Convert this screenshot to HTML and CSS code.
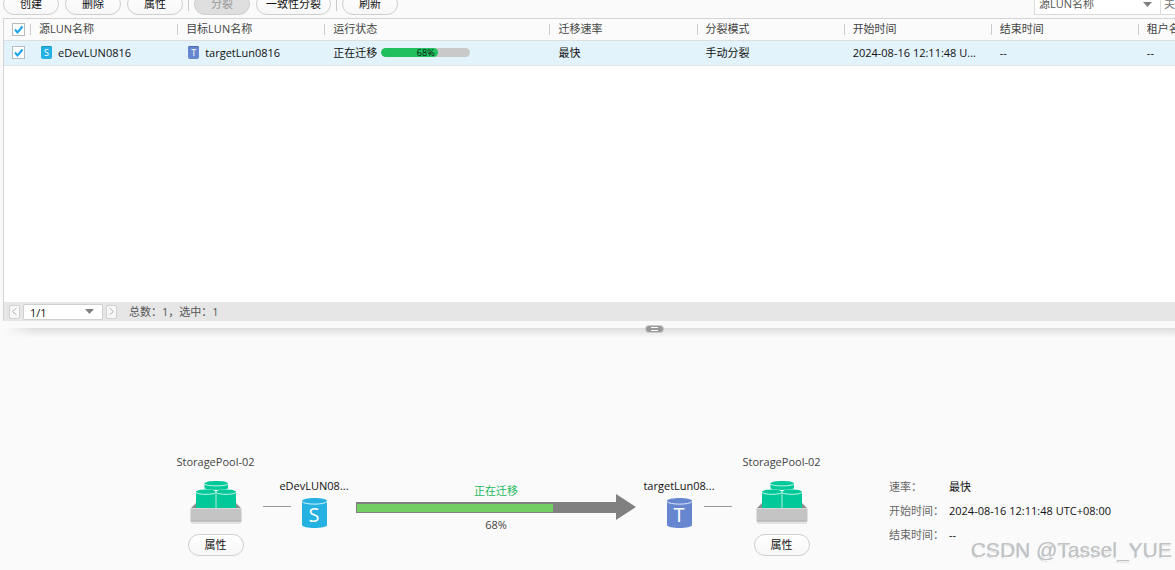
FILE: index.html
```html
<!DOCTYPE html>
<html lang="zh-CN">
<head>
<meta charset="utf-8">
<title>LUN 迁移</title>
<link rel="stylesheet" href="styles.css">
</head>
<body>
<svg class="defs" width="0" height="0" aria-hidden="true">
  <symbol id="pool" viewBox="0 0 56 46">
    <path d="M3 28l5-5v5zM53 28l-5-5v5z" fill="#8a8d8f"/>
    <path d="M16.500 3.500v4.500c0 2.500 23.500 2.500 23.500 0V3.500c0-3.300-23.500-3.300-23.500 0z" fill="#00c999"/>
    <path d="M16.500 3.800c1 2.800 22.500 2.800 23.500 0" fill="none" stroke="#d5f7ee" stroke-width=".9"/>
    <path d="M8 12v16h40V12c0-3.300-20-3.300-20 0 0-3.300-20-3.300-20 0z" fill="#00c999"/>
    <path d="M8 12.300c1 2.700 19 2.700 20 0 1 2.700 19 2.700 20 0" fill="none" stroke="#d5f7ee" stroke-width=".9"/>
    <path d="M28 11v17" stroke="#b5efdf"/>
    <rect x="3" y="41" width="50" height="3" rx="1" fill="#e2e2e2"/>
    <rect x="2.500" y="28" width="51" height="14" rx="1" fill="#c4c4c4"/>
    <path d="M3 28.500h50" stroke="#d8d8d8"/>
    <path d="M3 40.500h50" stroke="#b8b8b8"/>
  </symbol>
</svg>
<main class="page">
  <div class="toolbar">
    <button class="btn" type="button">创建</button>
    <button class="btn" type="button">删除</button>
    <button class="btn" type="button">属性</button>
    <span class="sep"></span>
    <button class="btn" type="button" disabled>分裂</button>
    <button class="btn btn-wide" type="button">一致性分裂</button>
    <span class="sep"></span>
    <button class="btn" type="button">刷新</button>
    <div class="search">
      <select class="field" aria-label="搜索字段"><option>源LUN名称</option></select>
      <input class="keyword" type="text" placeholder="关键字" aria-label="关键字">
    </div>
  </div>

  <section class="grid">
    <div class="grid-body">
      <table class="table">
        <colgroup>
          <col class="c-check"><col class="c-std"><col class="c-std"><col class="c-state"><col class="c-std"><col class="c-std"><col class="c-std"><col class="c-std"><col class="c-std">
        </colgroup>
        <thead>
          <tr>
            <th class="check"><input type="checkbox" checked aria-label="全选"></th>
            <th>源LUN名称</th><th>目标LUN名称</th><th>运行状态</th><th>迁移速率</th><th>分裂模式</th><th>开始时间</th><th>结束时间</th><th>租户名称</th>
          </tr>
        </thead>
        <tbody>
          <tr>
            <td class="check"><input type="checkbox" checked aria-label="选择 eDevLUN0816"></td>
            <td><span class="name"><span class="mini mini-s">S</span>eDevLUN0816</span></td>
            <td><span class="name"><span class="mini mini-t">T</span>targetLun0816</span></td>
            <td><span class="state">正在迁移<span class="bar"><span class="bar-fill" style="width:64%"></span><span class="bar-text">68%</span></span></span></td>
            <td>最快</td><td>手动分裂</td><td>2024-08-16 12:11:48 U...</td><td>--</td><td>--</td>
          </tr>
        </tbody>
      </table>
    </div>
    <div class="pager">
      <button class="step" type="button" aria-label="上一页"><svg width="7" height="9" viewBox="0 0 7 9"><path d="M5.500 1L1.500 4.500l4 3.500"/></svg></button>
      <select class="page-select" aria-label="页码"><option>1/1</option></select>
      <button class="step" type="button" aria-label="下一页"><svg width="7" height="9" viewBox="0 0 7 9"><path d="M1.500 1l4 3.500-4 3.500"/></svg></button>
      <span class="count">总数：1，选中：1</span>
    </div>
  </section>

  <div class="splitter">
    <button class="grip" type="button" aria-label="收起"></button>
  </div>

  <section class="detail">
    <div class="flow">
      <div class="pool">
        <span>StoragePool-02</span>
        <svg class="pool-icon" width="56" height="46"><use href="#pool"/></svg>
        <button class="btn" type="button">属性</button>
      </div>
      <span class="link"></span>
      <div class="lun">
        <span>eDevLUN08...</span>
        <span class="disk"><svg width="25" height="32" viewBox="0 0 25 32"><path d="M0 4v24c0 4 25 4 25 0V4C25 0 0 0 0 4z" fill="#25b1e2"/><path d="M0 4.500c2 3.500 23 3.500 25 0" fill="none" stroke="#d8f1fb"/></svg><span class="letter">S</span></span>
      </div>
      <div class="progress">
        <span class="progress-state">正在迁移</span>
        <div class="arrow">
          <div class="track"><div class="fill" style="width:76%"></div></div>
          <svg width="20" height="26" viewBox="0 0 20 26"><path d="M0 0l20 13L0 26z" fill="#808080"/></svg>
        </div>
        <span class="progress-value">68%</span>
      </div>
      <div class="lun">
        <span>targetLun08...</span>
        <span class="disk"><svg width="25" height="32" viewBox="0 0 25 32"><path d="M0 4v24c0 4 25 4 25 0V4C25 0 0 0 0 4z" fill="#6687d0"/><path d="M0 4.500c2 3.500 23 3.500 25 0" fill="none" stroke="#e0e7f7"/></svg><span class="letter">T</span></span>
      </div>
      <span class="link link-right"></span>
      <div class="pool">
        <span>StoragePool-02</span>
        <svg class="pool-icon" width="56" height="46"><use href="#pool"/></svg>
        <button class="btn" type="button">属性</button>
      </div>
    </div>
    <dl class="info">
      <dt>速率：</dt><dd>最快</dd>
      <dt>开始时间：</dt><dd>2024-08-16 12:11:48 UTC+08:00</dd>
      <dt>结束时间：</dt><dd>--</dd>
    </dl>
  </section>
  <span class="watermark">CSDN @Tassel_YUE</span>
</main>
</body>
</html>
```
FILE: styles.css
```css
* { box-sizing: border-box; }
body {
  margin: 0;
  background: #fafafa;
  color: #111;
  font: 11px/16px "Open Sans", "Noto Sans CJK SC", sans-serif;
}
button, input, select { font: inherit; color: inherit; }
.defs { display: block; height: 0; }
.page {
  position: relative;
  min-height: 100vh;
  overflow: hidden;
}

/* toolbar */
.toolbar {
  display: flex;
  align-items: flex-end;
  gap: 6px;
  height: 18px;
  padding: 0 0 3px 3px;
}
.btn {
  flex: none;
  width: 56px;
  height: 22px;
  padding: 0;
  border: 1px solid #cfcfcf;
  border-radius: 11px;
  background: linear-gradient(#fff, #f7f7f7);
  line-height: 20px;
}
.btn:disabled { background: #dedede; color: #999; }
.btn-wide { width: 75px; }
.sep {
  width: 1px;
  height: 16px;
  margin: 0 -1px 4px;
  background: #c8c8c8;
}
.search {
  display: flex;
  flex: none;
  margin-left: auto;
}
.field, .keyword {
  height: 22px;
  border: 1px solid #dcdcdc;
  background: #fff;
  color: #555;
}
.field, .page-select {
  appearance: none;
  background: #fff url("data:image/svg+xml,%3Csvg xmlns='http://www.w3.org/2000/svg' width='9' height='5'%3E%3Cpath d='M0 0h9L4.500 5z' fill='%23808080'/%3E%3C/svg%3E") no-repeat right 8px center;
}
.field { width: 127px; padding: 0 4px; }
.keyword {
  width: 14px;
  padding: 0 0 0 3px;
  border-width: 0 0 1px;
}

/* table */
.grid {
  margin-left: 3px;
  border-top: 1px solid #d4d4d4;
  border-left: 1px solid #d4d4d4;
}
.grid-body {
  min-height: 283px;
  overflow: hidden;
  background: #fff;
}
.table {
  width: 1281px;
  table-layout: fixed;
  border-collapse: collapse;
}
.c-check { width: 26px; }
.c-std { width: 147px; }
.c-state { width: 225px; }
th, td {
  padding: 0 0 0 9px;
  text-align: left;
  font-weight: normal;
  white-space: nowrap;
}
thead tr { background: #fbfbfb; border-bottom: 1px solid #dedede; }
th {
  height: 21px;
  color: #444;
  background: linear-gradient(#ccc, #ccc) no-repeat left center / 1px 11px;
}
tbody tr { background: #e3f3fb; border-bottom: 1px solid #dfe5e8; }
td { height: 25px; }
.check { padding-left: 8px; background: none; }
.check input {
  appearance: none;
  display: block;
  width: 13px;
  height: 13px;
  margin: 0;
  border: 1px solid #b5bcc0;
  background: #fff url("data:image/svg+xml,%3Csvg xmlns='http://www.w3.org/2000/svg' width='11' height='11'%3E%3Cpath d='M2 5.500l2.500 3L9.500 2.500' fill='none' stroke='%2318a3ea' stroke-width='2'/%3E%3C/svg%3E") no-repeat center;
}
.name, .state { display: flex; align-items: center; }
.name { gap: 6px; padding-left: 2px; }
.mini {
  width: 11px;
  height: 13px;
  border-radius: 2px;
  color: #fff;
  font-size: 9px;
  line-height: 14px;
  text-align: center;
}
.mini-s { background: #25b1e2; box-shadow: inset 0 1px #1995c2; }
.mini-t { background: #6687d0; box-shadow: inset 0 1px #4a6ab5; }
.state { gap: 4px; }
.bar {
  position: relative;
  width: 89px;
  height: 9px;
  border-radius: 5px;
  overflow: hidden;
  background: #c9c9c9;
}
.bar-fill {
  display: block;
  height: 100%;
  border-radius: 5px;
  background: #1fbf5c;
}
.bar-text {
  position: absolute;
  inset: 0;
  font-size: 9px;
  line-height: 9px;
  text-align: center;
}

/* pager */
.pager {
  display: flex;
  align-items: center;
  gap: 3px;
  height: 19px;
  padding-left: 5px;
  background: #e6e6e6;
}
.step {
  display: flex;
  flex: none;
  align-items: center;
  justify-content: center;
  width: 11px;
  height: 14px;
  padding: 0;
  border: 1px solid #d0d0d0;
  border-radius: 2px;
  background: #f8f8f8;
}
.step path { fill: none; stroke: #b5b5b5; }
.page-select {
  width: 80px;
  height: 16px;
  padding: 0 6px;
  border: 1px solid #d0d0d0;
  border-radius: 2px;
}
.count { margin-left: 9px; color: #555; }

/* splitter */
.splitter {
  display: flex;
  justify-content: center;
  height: 14px;
  margin: 7px 0 0 3px;
  padding-left: 130px;
  background:
    linear-gradient(90deg, #fafafa, transparent 32px),
    linear-gradient(#dedede, #fafafa 10px);
}
.grip {
  width: 19px;
  height: 8px;
  margin-top: -3px;
  padding: 0;
  border: 1px solid #ccc;
  border-radius: 4px;
  background:
    linear-gradient(#fff, #fff) no-repeat center 1px / 7px 1px,
    linear-gradient(#fff, #fff) no-repeat center 4px / 7px 1px,
    #999;
}

/* migration detail */
.detail {
  display: flex;
  align-items: flex-start;
  padding: 112px 0 0 175px;
}
.flow {
  display: flex;
  flex: 1;
  align-items: flex-start;
}
.pool, .lun {
  display: flex;
  flex: none;
  flex-direction: column;
  align-items: center;
  white-space: nowrap;
}
.pool { width: 81px; color: #444; }
.pool .btn { color: #111; }
.pool-icon { margin: 10px 0 8px; }
.link {
  flex: none;
  width: 28px;
  height: 1px;
  margin: 52px 0 0 7px;
  background: #999;
}
.link-right { margin: 52px 9px 0 2px; }
.lun { width: 46px; padding-top: 24px; }
.disk {
  display: grid;
  margin-top: 3px;
  place-items: center;
}
.disk > * { grid-area: 1 / 1; }
.letter {
  padding-top: 3px;
  color: #fff;
  font-size: 20px;
  line-height: 28px;
}
.progress {
  flex: 1;
  display: flex;
  flex-direction: column;
  align-items: center;
  margin: 0 20px 0 19px;
  padding-top: 29px;
}
.progress-state { color: #22b85c; }
.arrow {
  display: flex;
  align-items: center;
  width: 100%;
  margin-top: -5px;
}
.track {
  flex: 1;
  height: 11px;
  padding: 2px 1px 1px;
  background: #808080;
}
.fill { height: 8px; background: #73cf63; }
.progress-value { color: #444; margin-top: -3px; }
.info {
  display: grid;
  grid-template-columns: 60px 1fr;
  row-gap: 8px;
  width: 286px;
  margin: 25px 0 0 67px;
  white-space: nowrap;
}
.info dt { color: #666; }
.info dd { margin: 0; }
.watermark {
  position: absolute;
  right: 3px;
  bottom: 6px;
  color: #c2c2c2;
  font: 21px/28px "Liberation Sans", sans-serif;
  text-shadow: 1px 1px #fff, 0 1px 1px #aaa;
}
```
